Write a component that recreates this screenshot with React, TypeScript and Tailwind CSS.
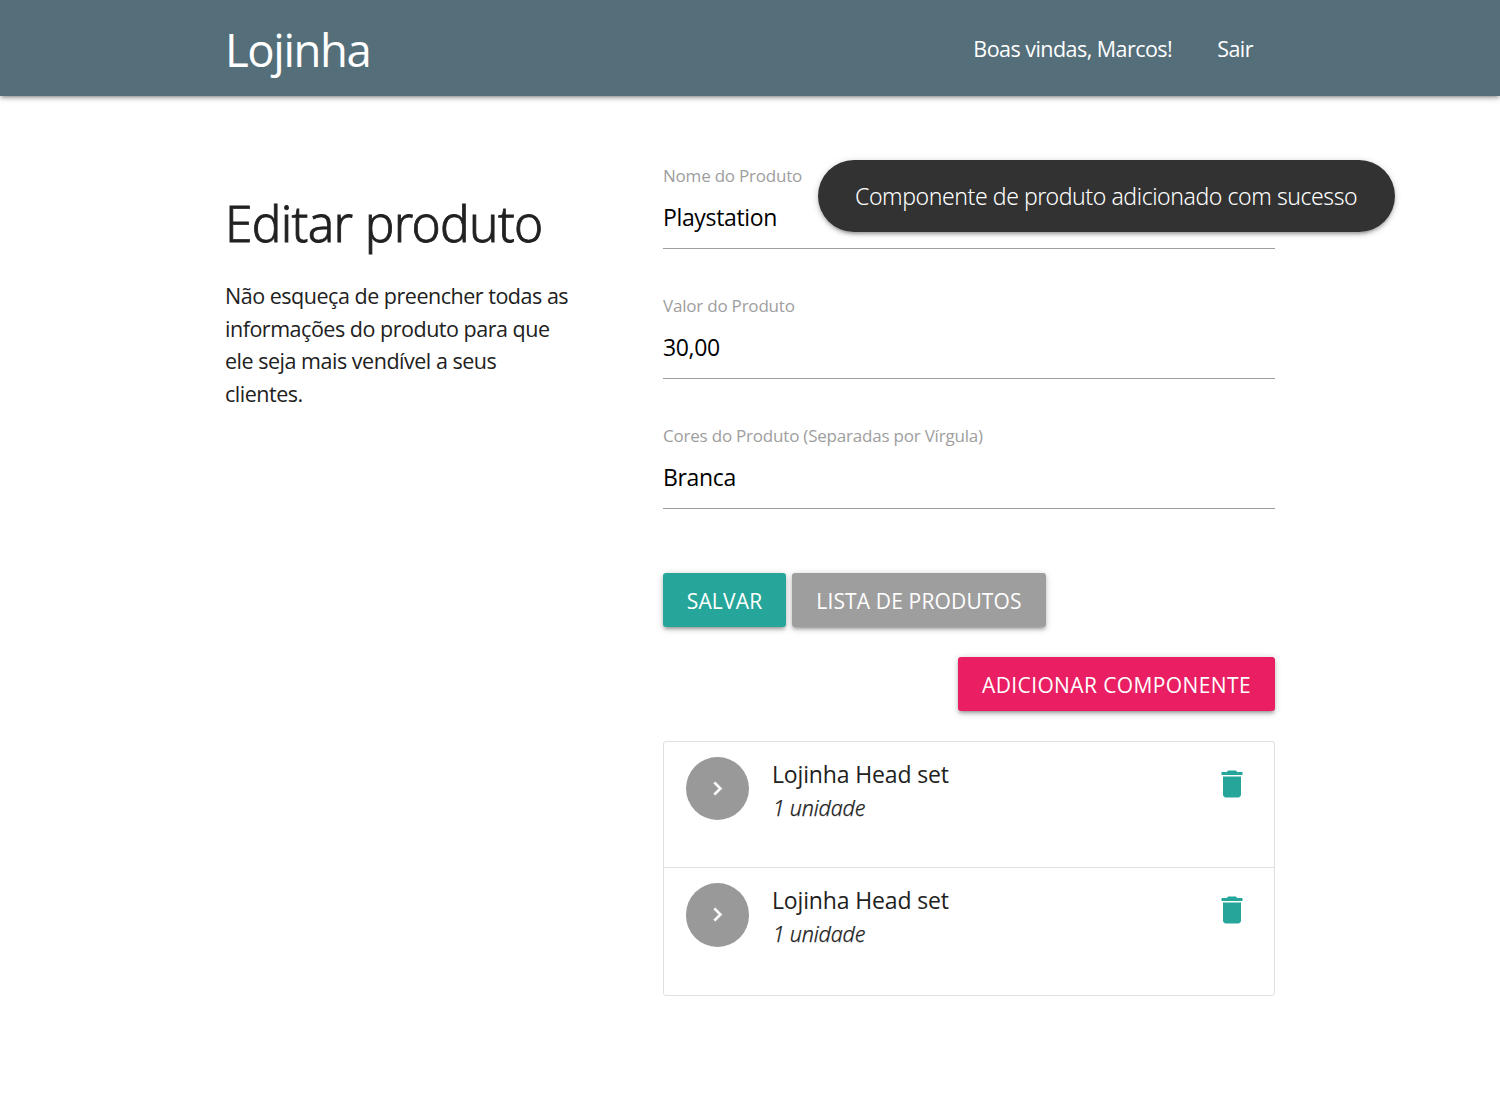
const components = [
  { id: 1, name: 'Lojinha Head set', amount: '1 unidade' },
  { id: 2, name: 'Lojinha Head set', amount: '1 unidade' },
];

const raised =
  'shadow-[0_3px_3px_0_rgba(0,0,0,0.14),0_4.5px_1.5px_-3px_rgba(0,0,0,0.12),0_1.5px_7.5px_0_rgba(0,0,0,0.2)]';

function Header() {
  return (
    <header className={`h-24 bg-[#546e7a] text-white ${raised}`}>
      <nav className="mx-auto flex h-full w-[1050px] items-center justify-between">
        <a className="pt-px text-[45.5px] leading-[60px] tracking-[-1.4px] whitespace-nowrap">Lojinha</a>
        <ul className="flex gap-[45px] pt-[2px] pr-[22px] text-[21.5px] tracking-[-0.54px] whitespace-nowrap">
          <li>Boas vindas, Marcos!</li>
          <li>Sair</li>
        </ul>
      </nav>
    </header>
  );
}

function Field({ label, value }: { label: string; value: string }) {
  return (
    <label className="block">
      <span className="block text-[17px] leading-6 tracking-[-0.21px] text-[#9e9e9e]">{label}</span>
      <input
        type="text"
        defaultValue={value}
        className="block h-[61px] w-full border-b border-[#9e9e9e] bg-transparent pb-[3px] text-[23px] tracking-[-0.35px] text-black outline-none"
      />
    </label>
  );
}

function Button({ className, children }: { className: string; children: string }) {
  return (
    <button
      type="button"
      className={`h-[54px] rounded-[3px] pt-[4px] text-center text-[21px] whitespace-nowrap text-white uppercase ${raised} ${className}`}
    >
      {children}
    </button>
  );
}

function Chevron() {
  return (
    <svg viewBox="0 0 24 24" className="size-[27px] fill-white stroke-white stroke-[0.4]">
      <path d="M10 6L8.59 7.41 13.17 12l-4.58 4.59L10 18l6-6z" />
    </svg>
  );
}

function Trash() {
  return (
    <svg viewBox="0 0 24 24" className="size-9 fill-[#26a69a]">
      <path d="M6 19c0 1.1.9 2 2 2h8c1.1 0 2-.9 2-2V7H6v12zM19 4h-3.5l-1-1h-5l-1 1H5v2h14V4z" />
    </svg>
  );
}

function ComponentRow({ name, amount }: { name: string; amount: string }) {
  return (
    <li className="flex h-[126.4px] border-b border-[#e0e0e0] pl-[22px] last:h-[126.6px] last:border-b-0">
      <span className="mt-[15px] flex size-[63.2px] shrink-0 items-center justify-center rounded-full bg-[#999]">
        <Chevron />
      </span>
      <div className="ml-[22.8px] flex-1 pt-[15px]">
        <p className="text-[23px] leading-[34px] tracking-[-0.15px]">{name}</p>
        <p className="pl-[0.8px] font-['Noto_Sans',sans-serif] text-[21.5px] leading-[34.4px] font-light tracking-[-0.2px] italic [-webkit-text-stroke:0.25px]">
          {amount}
        </p>
      </div>
      <a className="mt-[23.5px] mr-[24.5px]">
        <Trash />
      </a>
    </li>
  );
}

export default function App() {
  return (
    <div className="relative min-h-[1099px] bg-white font-['Open_Sans','Noto_Sans',sans-serif] text-[#212121]">
      <Header />
      <main className="mx-auto flex w-[1050px] justify-between pt-[68px]">
        <section className="w-[350px] pt-[31px]">
          <h1 className="font-['Noto_Sans',sans-serif] text-[49.5px] leading-[57px] font-light tracking-[-0.66px] whitespace-nowrap [-webkit-text-stroke:0.8px]">
            Editar produto
          </h1>
          <p className="mt-[27.75px] text-[21.5px] leading-[32.75px] tracking-[-0.48px]">
            Não esqueça de preencher todas as informações do produto para que ele seja mais vendível a seus clientes.
          </p>
        </section>
        <section className="w-[612px]">
          <form className="flex flex-col gap-[45px]">
            <Field label="Nome do Produto" value="Playstation" />
            <Field label="Valor do Produto" value="30,00" />
            <Field label="Cores do Produto (Separadas por Vírgula)" value="Branca" />
          </form>
          <div className="mt-16 flex gap-1.5">
            <Button className="w-[123px] bg-[#26a69a] tracking-[0.19px]">Salvar</Button>
            <Button className="w-[254px] bg-[#9e9e9e] tracking-[0.15px]">Lista de produtos</Button>
          </div>
          <div className="mt-[30px] flex justify-end">
            <Button className="w-[317px] bg-[#e91e63] tracking-[0.39px]">Adicionar componente</Button>
          </div>
          <ul className="mt-[30px] rounded-[3px] border border-[#e0e0e0]">
            {components.map((c) => (
              <ComponentRow key={c.id} name={c.name} amount={c.amount} />
            ))}
          </ul>
        </section>
      </main>
      <div
        role="status"
        className={`absolute top-40 right-[105px] flex h-[72px] w-[577px] items-center rounded-full bg-[#323232] pl-[37px] font-['Noto_Sans',sans-serif] text-[23px] font-light tracking-[-0.42px] whitespace-nowrap text-white ${raised}`}
      >
        Componente de produto adicionado com sucesso
      </div>
    </div>
  );
}
